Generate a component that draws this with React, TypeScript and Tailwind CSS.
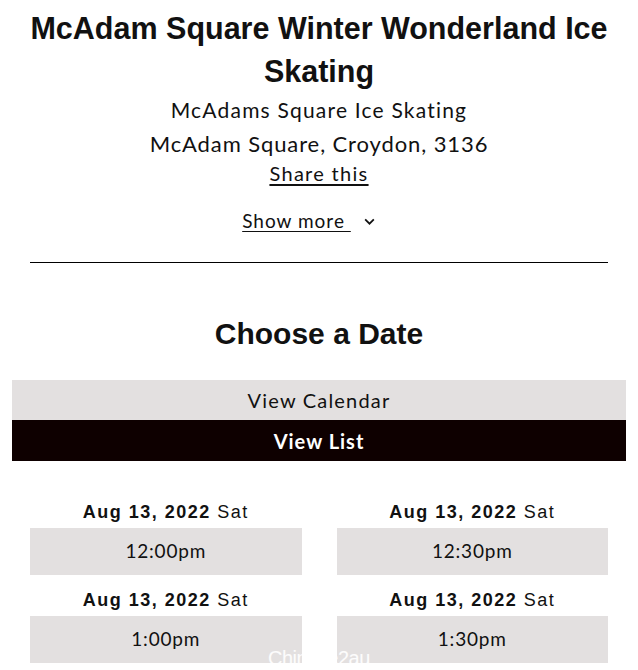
import React from 'react'

const slots = [
  { date: 'Aug 13, 2022', day: 'Sat', time: '12:00pm' },
  { date: 'Aug 13, 2022', day: 'Sat', time: '12:30pm' },
  { date: 'Aug 13, 2022', day: 'Sat', time: '1:00pm' },
  { date: 'Aug 13, 2022', day: 'Sat', time: '1:30pm' },
]

const App = () => {
  return (
    <div className="relative w-[638px] h-[670px] overflow-hidden bg-white px-3 text-[#111] font-['Lato',sans-serif]">
      {/* Event header */}
      <div className="px-[18px]">
        <h1 className="pt-[7px] text-center font-['Liberation_Sans',Arial,sans-serif] font-bold text-[30.5px] leading-[43px] text-[#111]">
          McAdam Square Winter Wonderland Ice Skating
        </h1>
        <p className="text-center text-[21px] leading-[34px] tracking-[1.2px]">McAdams Square Ice Skating</p>
        <p className="text-center text-[22px] leading-[34px] tracking-[0.9px]">McAdam Square, Croydon, 3136</p>
        <div className="text-center">
          <a className="text-[20px] leading-[24px] underline underline-offset-[3px] tracking-[1.3px]">Share this</a>
        </div>
        <div className="mt-[22px] pr-[20px] flex justify-center items-center text-[19px] leading-[24px] tracking-[1px]">
          <span className="underline underline-offset-[3px] whitespace-pre">Show more </span>
          <svg className="ml-[12px]" width="13" height="13" viewBox="0 0 12 12" fill="none" stroke="#111" strokeWidth="1.6">
            <path d="M2 4l4 4 4-4" />
          </svg>
        </div>
        <hr className="mt-[29px] border-t border-black" />
      </div>

      {/* Choose a date */}
      <h2 className="mt-[51px] text-center font-['Liberation_Sans',Arial,sans-serif] font-bold text-[30px] leading-[40px]">
        Choose a Date
      </h2>
      <div className="mt-[26px]">
        <button className="w-full h-10 bg-[#e3e0e0] text-[20px] tracking-[1.2px] text-[#111]">View Calendar</button>
        <button className="w-full h-[41px] bg-[#0e0000] text-[20px] font-bold tracking-[1px] text-white">View List</button>
      </div>

      <div className="mt-[39px] px-[18px] grid grid-cols-2 gap-x-[35px] gap-y-[13px]">
        {slots.map((s, i) => (
          <div key={i} className="flex flex-col">
            <p className="text-center text-[18px] leading-[24px] tracking-[1.5px] font-['Liberation_Sans',Arial,sans-serif]">
              <span className="font-bold">{s.date}</span> <span>{s.day}</span>
            </p>
            <button className="mt-1 h-[47px] bg-[#e3e0e0] text-[19px] tracking-[0.8px] text-[#111]">{s.time}</button>
          </div>
        ))}
      </div>

      {/* watermark */}
      <div className="absolute left-[268px] top-[643px] text-[20px] tracking-[-0.5px] text-white/90 font-['Liberation_Sans',sans-serif] pointer-events-none">
        Chinese2au
      </div>
    </div>
  )
}

export default App
